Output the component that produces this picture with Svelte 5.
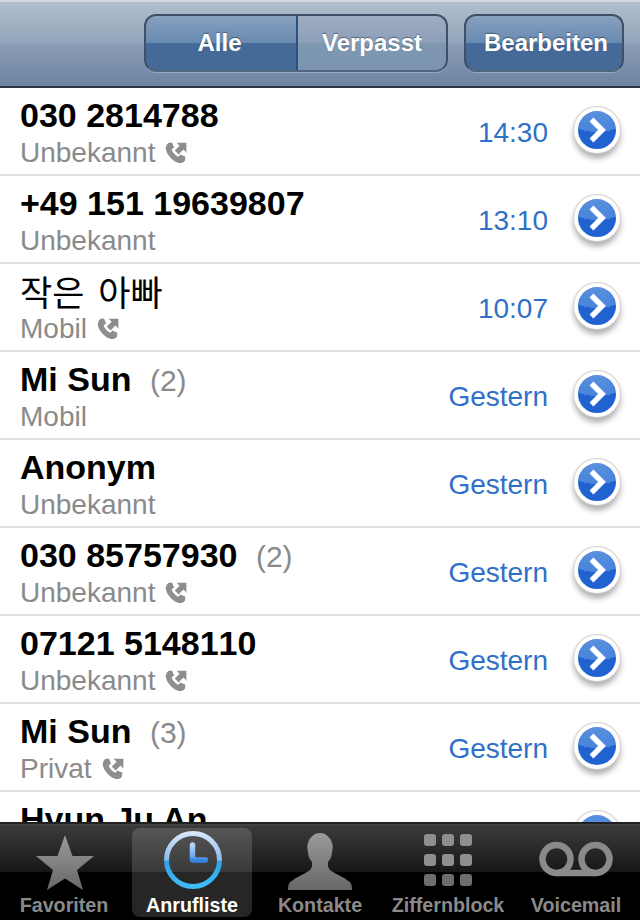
<script>
  const rows = [
    { name: '030 2814788', sub: 'Unbekannt', time: '14:30', out: true, bold: true, num: true },
    { name: '+49 151 19639807', sub: 'Unbekannt', time: '13:10', bold: true, num: true },
    { name: '작은 아빠', sub: 'Mobil', time: '10:07', out: true, cjk: true },
    { name: 'Mi Sun', count: 2, sub: 'Mobil', time: 'Gestern', bold: true },
    { name: 'Anonym', sub: 'Unbekannt', time: 'Gestern', bold: true },
    { name: '030 85757930', count: 2, sub: 'Unbekannt', time: 'Gestern', out: true, bold: true, num: true },
    { name: '07121 5148110', sub: 'Unbekannt', time: 'Gestern', out: true, bold: true, num: true },
    { name: 'Mi Sun', count: 3, sub: 'Privat', time: 'Gestern', out: true, bold: true },
    { name: 'Hyun Ju An', sub: 'Mobil', time: 'Gestern', bold: true }
  ];
  const keys = [0, 1, 2, 3, 4, 5, 6, 7, 8];
</script>

<div class="screen">
  <header class="nav">
    <div class="segment">
      <button class="seg active">Alle</button>
      <button class="seg">Verpasst</button>
    </div>
    <button class="edit">Bearbeiten</button>
  </header>

  <ul class="list">
    {#each rows as row}
      <li class="row">
        <div class="main">
          <div class="title">
            <span class:bold={row.bold} class:cjk={row.cjk} class:num={row.num}>{row.name}</span>
            {#if row.count}<span class="count">({row.count})</span>{/if}
          </div>
          <div class="sub">
            <span>{row.sub}</span>
            {#if row.out}
              <svg class="phone" width="22" height="22" viewBox="0 0 22 22">
                <path d="M3.2 1 L7 .6 L9 5.6 L6.6 7.6 C7.6 10.6 10.2 13.4 13.4 14.8 L15.4 12.6 L20.4 14.8 L20 18.4 C18.4 20.8 15.4 21.8 12.6 20.6 C7 18.4 2.6 13.6 1 8 C.4 5.4 1.2 2.8 3.2 1 Z" fill="#8e8e8e"/>
                <path d="M11.6 0.8 H21.4 V10.6 L18.4 7.6 L13.6 12.4 L9.8 8.6 L14.6 3.8 Z" fill="#8e8e8e"/>
              </svg>
            {/if}
          </div>
        </div>
        <span class="time">{row.time}</span>
        <span class="disc">
          <svg width="24" height="28" viewBox="0 0 24 28">
            <path d="M6.5 3.5 L17 14 L6.5 24.5" fill="none" stroke="#fff" stroke-width="5.5"/>
          </svg>
        </span>
      </li>
    {/each}
  </ul>

  <nav class="tabs">
    <div class="tab">
      <svg class="icon" width="64" height="64" viewBox="0 0 64 64">
        <defs>
          <linearGradient id="g" x1="0" y1="0" x2="0" y2="1">
            <stop offset="0" stop-color="#9a9a9a"/>
            <stop offset="1" stop-color="#686868"/>
          </linearGradient>
        </defs>
        <path d="M33 5 L40.5 26 L62 26 L45 40 L51 60 L33 48.5 L15 60 L21 40 L4 26 L25.5 26 Z" fill="url(#g)"/>
      </svg>
      <span>Favoriten</span>
    </div>
    <div class="tab selected">
      <svg class="icon" width="64" height="64" viewBox="0 0 64 64">
        <defs>
          <linearGradient id="b" x1="0" y1="0" x2="0" y2="1">
            <stop offset="0" stop-color="#d4e6f8"/>
            <stop offset=".5" stop-color="#8cbcec"/>
            <stop offset=".52" stop-color="#30a0ea"/>
            <stop offset="1" stop-color="#3fbcf6"/>
          </linearGradient>
          <linearGradient id="h" x1="0" y1="0" x2="0" y2="1">
            <stop offset="0" stop-color="#b4d4f6"/>
            <stop offset=".75" stop-color="#6eaaee"/>
            <stop offset="1" stop-color="#3484e2"/>
          </linearGradient>
        </defs>
        <circle cx="33" cy="31" r="26.5" fill="none" stroke="url(#b)" stroke-width="5"/>
        <path d="M32.5 16 V31 H45.5" fill="none" stroke="url(#h)" stroke-width="5.5" stroke-linecap="round" stroke-linejoin="round"/>
      </svg>
      <span>Anrufliste</span>
    </div>
    <div class="tab">
      <svg class="icon" width="64" height="64" viewBox="0 0 64 64">
        <path d="M0 60 C0 55 1 53 3 51.5 C8 47 17 44 22 40 C24 38 24.5 35 24 32 C21 29 20 25 20 22 C19 19 19 15 20 13 C21 8 26 3 32 3 C38 3 43 8 44 13 C45 15 45 19 44 22 C44 25 43 29 40 32 C39.5 35 40 38 42 40 C47 44 56 47 61 51.5 C63 53 64 55 64 60 Z" fill="url(#g)"/>
      </svg>
      <span>Kontakte</span>
    </div>
    <div class="tab">
      <div class="icon keypad">
        {#each keys as k (k)}<i></i>{/each}
      </div>
      <span>Ziffernblock</span>
    </div>
    <div class="tab">
      <svg class="icon" width="76" height="64" viewBox="0 0 76 64">
        <g fill="none" stroke="#8a8a8a" stroke-width="6.5">
          <circle cx="18.5" cy="29" r="14"/>
          <circle cx="57.5" cy="29" r="14"/>
          <path d="M18.5 43 H57.5"/>
        </g>
      </svg>
      <span>Voicemail</span>
    </div>
  </nav>
</div>

<style>
  :global(body) { margin: 0; }
  .screen {
    width: 640px;
    height: 920px;
    display: flex;
    flex-direction: column;
    overflow: hidden;
    background: #fff;
    font-family: "Liberation Sans", Arial, sans-serif;
  }
  .nav {
    flex: none;
    height: 88px;
    box-sizing: border-box;
    padding: 12px 16px 0 144px;
    display: flex;
    gap: 16px;
    align-items: flex-start;
    border-top: 2px solid #d4d9df;
    border-bottom: 2px solid #2c3540;
    background: linear-gradient(#b2bfce 0%, #91a3b9 50%, #8a9db5 50.5%, #6d83a1 100%);
  }
  button {
    font: bold 24px "Liberation Sans", Arial, sans-serif;
    color: #fff;
    text-shadow: 0 -1px 1px rgba(40, 55, 80, .6);
    padding: 0;
    margin: 0;
    height: 58px;
    box-sizing: border-box;
  }
  .segment {
    display: flex;
    width: 304px;
    height: 58px;
    box-sizing: border-box;
    border: 2px solid #3f5068;
    border-bottom-color: #526680;
    border-radius: 12px;
    overflow: hidden;
    box-shadow: 0 1px 0 rgba(255, 255, 255, .25);
    background: #3f5068;
  }
  .seg {
    border: 0;
    height: 54px;
    background: linear-gradient(#9eadc2 0%, #8c9fb8 50%, #7f98b2 50.5%, #7b94af 100%);
  }
  .seg:first-child { width: 152px; padding-right: 3px; }
  .seg:last-child { flex: 1; }
  .seg.active {
    background: linear-gradient(#8aa0bf 0%, #668ab0 50%, #456a98 50.5%, #456a98 100%);
    border-right: 2px solid #2e4f7e;
  }
  .edit {
    width: 160px;
    padding-left: 4px;
    border: 2px solid #3f5068;
    border-bottom-color: #526680;
    border-radius: 12px;
    background: linear-gradient(#8aa0bf 0%, #668ab0 50%, #456a98 50.5%, #456a98 100%);
    box-shadow: 0 1px 0 rgba(255, 255, 255, .25);
  }
  .list {
    flex: 1;
    min-height: 0;
    overflow: hidden;
    list-style: none;
    margin: 0;
    padding: 0;
  }
  .row {
    height: 88px;
    box-sizing: border-box;
    border-bottom: 2px solid #e0e0e0;
    display: flex;
    align-items: center;
    padding: 0 20px;
  }
  .main { flex: 1; min-width: 0; margin-bottom: 2px; }
  .title {
    height: 46px;
    line-height: 48px;
    font-size: 34px;
    color: #000;
    white-space: nowrap;
  }
  .bold { font-weight: bold; }
  .num { font-kerning: none; }
  .cjk {
    font-family: "Noto Sans CJK KR", sans-serif;
    font-weight: 400;
    font-size: 35px;
    word-spacing: 6px;
  }
  .count {
    font-size: 30px;
    font-weight: 400;
    color: #8a8a8a;
    margin-left: 9px;
  }
  .sub {
    height: 32px;
    line-height: 32px;
    font-size: 28px;
    color: #8a8a8a;
    display: flex;
    align-items: center;
    gap: 10px;
  }
  .time {
    font-size: 28px;
    color: #2f70c8;
    margin: 4px 26px 0 0;
  }
  .disc {
    width: 38px;
    height: 38px;
    margin-bottom: 2px;
    border-radius: 50%;
    border: 4px solid #fff;
    display: flex;
    align-items: center;
    justify-content: center;
    background:
      radial-gradient(ellipse 34px 21px at 50% 0, #5a90df 0, #4a84dc 100%, transparent 100%),
      #1f62d0;
    box-shadow: 0 0 1px 1px #d0d0d0, 0 5px 6px rgba(0, 0, 0, .35);
  }
  .tabs {
    flex: none;
    height: 98px;
    box-sizing: border-box;
    border-top: 2px solid #202020;
    display: grid;
    grid-template-columns: repeat(5, 128px);
    background: linear-gradient(#484848 0, #3b3b3b 2px, #171717 47.5px, #000 48px);
  }
  .tab {
    position: relative;
    display: flex;
    flex-direction: column;
    align-items: center;
    color: #8a8a8a;
    font-size: 19.7px;
    font-weight: bold;
    white-space: nowrap;
  }
  .tab .icon { flex: none; margin-top: 6px; height: 64px; }
  .tab span { line-height: 24px; margin-top: -1px; }
  .tab.selected {
    margin: 4px 4px 5px;
    border-radius: 8px;
    background: rgba(255, 255, 255, .15);
    color: #fff;
  }
  .tab.selected .icon { margin-top: 1px; }
  .tab.selected span { margin-top: 0; }
  .keypad {
    display: grid;
    grid-template-columns: repeat(3, 12px);
    grid-auto-rows: 12px;
    gap: 8px 6px;
    align-content: start;
    padding-top: 4px;
    height: 60px !important;
  }
  .keypad i {
    display: block;
    border-radius: 3px;
    background: #8f8f8f;
  }
  .keypad i:nth-child(n + 7) { background: #6e6e6e; }
</style>
